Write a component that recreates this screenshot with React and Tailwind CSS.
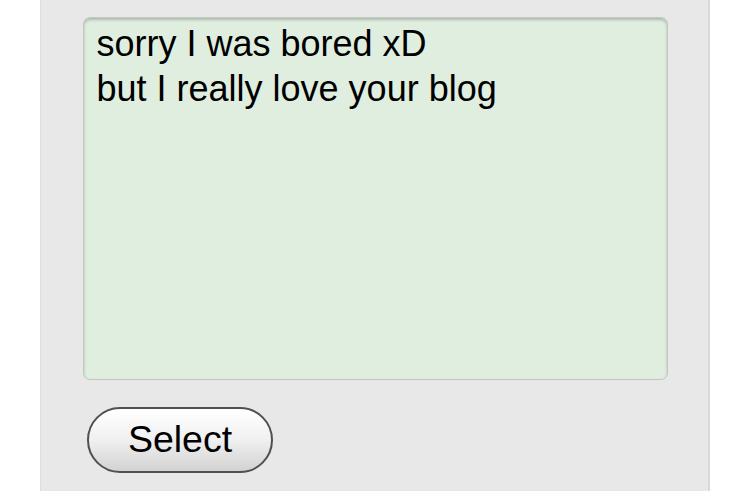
import React from "react";

export default function App() {
  return (
    <div className="w-[750px] h-[491px] bg-white overflow-hidden" style={{ fontFamily: '"Liberation Sans", Arial, Helvetica, sans-serif' }}>
      <div className="ml-[40px] w-[670px] h-[491px] bg-[#e8e8e8] border-l border-r-2 border-l-[#dedede] border-r-[#d9d9d9] pt-[17px] pl-[42px]">
        <div className="w-[585px] h-[363px] rounded-[7px] border border-[#c2c7c2] bg-[#dfeedf] shadow-[inset_0_2px_3px_rgba(0,0,0,0.22)] pl-[12.5px] pt-[3px] text-[36px] leading-[45px] text-black whitespace-pre">
          {"sorry I was bored xD\nbut I really love your blog"}
        </div>
        <button className="mt-[27px] ml-[4px] w-[186px] h-[66px] rounded-full border-2 border-[#505050] bg-gradient-to-b from-[#ffffff] via-[#f0f0f0] to-[#d2d2d2] text-[37.5px] leading-none text-black flex items-center justify-center pb-[1px]">
          Select
        </button>
      </div>
    </div>
  );
}
